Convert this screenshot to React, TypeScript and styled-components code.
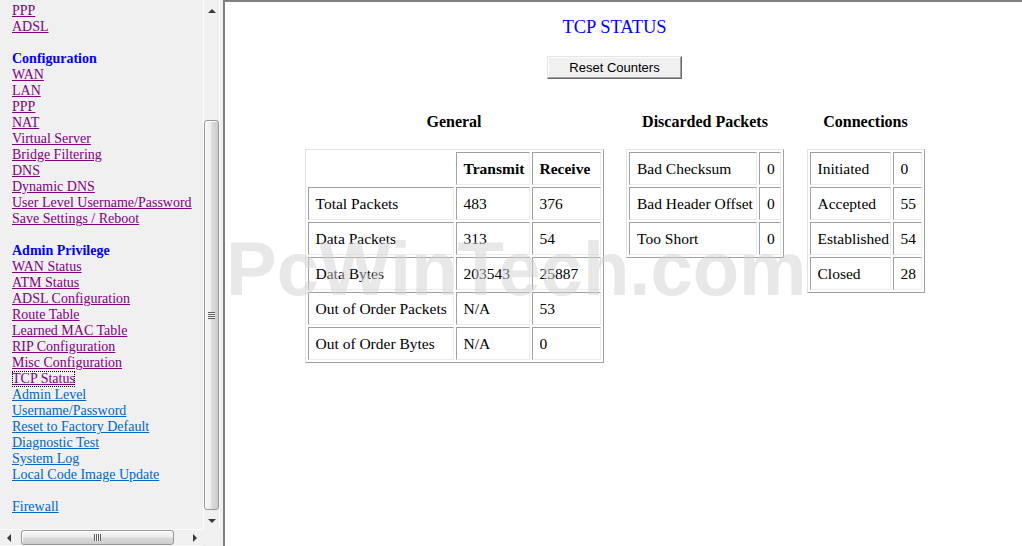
import React from "react";
import styled, { createGlobalStyle } from "styled-components";

const GlobalStyle = createGlobalStyle`
  html, body { margin: 0; padding: 0; background: #ffffff; overflow: hidden; }
  body { font-family: "Liberation Serif", "Times New Roman", serif; }
`;

const Frameset = styled.div`
  display: flex;
  width: 1022px;
  height: 546px;
  overflow: hidden;
`;

/* ---------- left navigation frame ---------- */

const LeftFrame = styled.div`
  flex: none;
  display: grid;
  grid-template-columns: 203px 17px;
  grid-template-rows: 529px 17px;
  padding-right: 3px;
  background: #f0f0f0;
`;

const Nav = styled.nav`
  overflow: hidden;
  padding: 3px 0 0 12px;
  display: flex;
  flex-direction: column;
  align-items: flex-start;
  font-family: "Liberation Serif", "Times New Roman", serif;
  font-size: 14px;
  line-height: 16px;
  white-space: nowrap;
`;

const NavHeading = styled.div`
  color: #0000ff;
  font-weight: bold;
`;

const NavGap = styled.div`
  height: 16px;
`;

type LinkState = "visited" | "link" | "focus";

const NavLink = styled.a<{ $state: LinkState }>`
  color: ${({ $state }) => ($state === "link" ? "#0066cc" : "#800080")};
  text-decoration: underline;
  outline: ${({ $state }) => ($state === "focus" ? "1px dotted #000" : "none")};
  outline-offset: -1px;
`;

const VScroll = styled.div`
  display: flex;
  flex-direction: column;
  background: #f0f0f0;
  box-shadow: inset 1px 0 #fbfbfb, inset -1px 0 #fbfbfb;
`;

const HScroll = styled.div`
  display: flex;
  flex-direction: row;
  align-items: center;
  background: #f0f0f0;
  box-shadow: inset 0 1px #fbfbfb, inset 0 -1px #fbfbfb;
`;

const Corner = styled.div`
  background: #f0f0f0;
`;

const ScrollButton = styled.div<{ $len: number; $horizontal?: boolean }>`
  flex: none;
  display: flex;
  align-items: center;
  justify-content: center;
  ${({ $len, $horizontal }) =>
    $horizontal ? `width: ${$len}px; height: 17px;` : `height: ${$len}px; width: 17px;`}
`;

type Dir = "up" | "down" | "left" | "right";

const Arrow = styled.span<{ $dir: Dir }>`
  width: 0;
  height: 0;
  border-style: solid;
  border-color: transparent;
  ${({ $dir }) =>
    $dir === "up"
      ? "border-width: 0 4px 4px 4px; border-bottom-color: #3a3a3a;"
      : $dir === "down"
      ? "border-width: 4px 4px 0 4px; border-top-color: #3a3a3a;"
      : $dir === "left"
      ? "border-width: 4px 4px 4px 0; border-right-color: #3a3a3a;"
      : "border-width: 4px 0 4px 4px; border-left-color: #3a3a3a;"}
`;

const VThumb = styled.div`
  flex: none;
  margin: 99px 0 0 1px;
  width: 15px;
  height: 390px;
  box-sizing: border-box;
  border: 1px solid #979797;
  border-radius: 3px;
  background: linear-gradient(to right, #f6f6f6 0%, #ececec 45%, #d9d9d9 55%, #cdcdcd 100%);
  box-shadow: inset 1px 1px #ffffff;
  display: flex;
  align-items: center;
  justify-content: center;
`;

const VGrip = styled.span`
  width: 7px;
  height: 7px;
  background: repeating-linear-gradient(to bottom, #5c5c5c 0 1px, #f6f6f6 1px 2px);
`;

const VTrackFill = styled.div`
  flex: 1;
`;

const HThumb = styled.div`
  flex: none;
  margin-left: 4px;
  width: 153px;
  height: 15px;
  box-sizing: border-box;
  border: 1px solid #979797;
  border-radius: 3px;
  background: linear-gradient(to bottom, #f6f6f6 0%, #ececec 45%, #d9d9d9 55%, #cdcdcd 100%);
  box-shadow: inset 1px 1px #ffffff;
  display: flex;
  align-items: center;
  justify-content: center;
`;

const HGrip = styled.span`
  width: 7px;
  height: 7px;
  background: repeating-linear-gradient(to right, #5c5c5c 0 1px, #f6f6f6 1px 2px);
`;

const HTrackFill = styled.div`
  flex: 1;
`;

/* ---------- right content frame ---------- */

const RightFrame = styled.main`
  flex: 1;
  position: relative;
  background: #ffffff;
  border-top: 2px solid #808080;
  border-left: 2px solid #808080;
  padding-right: 18px;
  display: flex;
  flex-direction: column;
  align-items: center;
  overflow: hidden;
`;

const Title = styled.h1`
  margin: 15px 0 0;
  font-family: "Liberation Serif", "Times New Roman", serif;
  font-size: 18.5px;
  line-height: 21px;
  font-weight: normal;
  color: #0000ff;
`;

const ResetButton = styled.button`
  margin-top: 18px;
  width: 135px;
  height: 23px;
  padding: 0;
  box-sizing: border-box;
  background: #f0f0f0;
  border: 1px solid;
  border-color: #e3e3e3 #696969 #696969 #e3e3e3;
  box-shadow: inset -1px -1px #a0a0a0, inset 1px 1px #ffffff;
  font-family: "Liberation Sans", Arial, sans-serif;
  font-size: 13px;
  color: #000;
`;

const SectionsRow = styled.div`
  margin-top: 34px;
  display: flex;
  align-items: flex-start;
  gap: 22.5px;
`;

const Section = styled.section`
  display: flex;
  flex-direction: column;
  align-items: center;
`;

const SectionTitle = styled.h2`
  margin: 0;
  font-family: "Liberation Serif", "Times New Roman", serif;
  font-size: 16px;
  line-height: 18px;
  font-weight: bold;
  color: #000;
  white-space: nowrap;
`;

const Table = styled.table<{ $width: number }>`
  margin-top: 18px;
  width: ${({ $width }) => $width}px;
  box-sizing: border-box;
  table-layout: fixed;
  border-collapse: separate;
  border-spacing: 2px;
  empty-cells: hide;
  border: 1px solid;
  border-color: #e3e3e3 #a0a0a0 #a0a0a0 #e3e3e3;
  font-family: "Liberation Serif", "Times New Roman", serif;
  font-size: 15.5px;
  line-height: 18px;
  color: #000;
`;

const Td = styled.td<{ $w?: number }>`
  box-sizing: border-box;
  ${({ $w }) => ($w ? `width: ${$w}px;` : "")}
  padding: 7px 7px 6px;
  border: 1px solid;
  border-color: #a0a0a0 #ececec #ececec #a0a0a0;
  text-align: left;
  white-space: nowrap;
  overflow: visible;
`;

const Th = styled(Td).attrs({ as: "th" })`
  font-weight: bold;
`;

const Watermark = styled.div`
  position: absolute;
  left: 1px;
  top: 229px;
  font-family: "Liberation Sans", Arial, sans-serif;
  font-weight: bold;
  font-size: 76px;
  line-height: 76px;
  color: rgba(210, 210, 210, 0.5);
  white-space: nowrap;
  pointer-events: none;
  user-select: none;
`;

/* ---------- data ---------- */

type NavItem =
  | { kind: "link"; text: string; state: LinkState }
  | { kind: "heading"; text: string }
  | { kind: "gap" };

const v = (text: string): NavItem => ({ kind: "link", text, state: "visited" });
const l = (text: string): NavItem => ({ kind: "link", text, state: "link" });
const h = (text: string): NavItem => ({ kind: "heading", text });
const gap: NavItem = { kind: "gap" };

const navItems: NavItem[] = [
  v("PPP"),
  v("ADSL"),
  gap,
  h("Configuration"),
  v("WAN"),
  v("LAN"),
  v("PPP"),
  v("NAT"),
  v("Virtual Server"),
  v("Bridge Filtering"),
  v("DNS"),
  v("Dynamic DNS"),
  v("User Level Username/Password"),
  v("Save Settings / Reboot"),
  gap,
  h("Admin Privilege"),
  v("WAN Status"),
  v("ATM Status"),
  v("ADSL Configuration"),
  v("Route Table"),
  v("Learned MAC Table"),
  v("RIP Configuration"),
  v("Misc Configuration"),
  { kind: "link", text: "TCP Status", state: "focus" },
  l("Admin Level"),
  l("Username/Password"),
  l("Reset to Factory Default"),
  l("Diagnostic Test"),
  l("System Log"),
  l("Local Code Image Update"),
  gap,
  l("Firewall"),
];

interface TableSpec {
  title: string;
  cols: number[];
  header?: string[];
  rows: string[][];
}

const sections: TableSpec[] = [
  {
    title: "General",
    cols: [146, 74, 69],
    header: ["", "Transmit", "Receive"],
    rows: [
      ["Total Packets", "483", "376"],
      ["Data Packets", "313", "54"],
      ["Data Bytes", "203543", "25887"],
      ["Out of Order Packets", "N/A", "53"],
      ["Out of Order Bytes", "N/A", "0"],
    ],
  },
  {
    title: "Discarded Packets",
    cols: [128, 22],
    rows: [
      ["Bad Checksum", "0"],
      ["Bad Header Offset", "0"],
      ["Too Short", "0"],
    ],
  },
  {
    title: "Connections",
    cols: [81, 29],
    rows: [
      ["Initiated", "0"],
      ["Accepted", "55"],
      ["Established", "54"],
      ["Closed", "28"],
    ],
  },
];

function StatTable({ spec }: { spec: TableSpec }) {
  const width = spec.cols.reduce((a, b) => a + b, 0) + 2 * (spec.cols.length + 1) + 2;
  return (
    <Section>
      <SectionTitle>{spec.title}</SectionTitle>
      <Table $width={width}>
        <tbody>
          {spec.header && (
            <tr>
              {spec.header.map((c, i) => (
                <Th key={i} $w={spec.cols[i]}>
                  {c}
                </Th>
              ))}
            </tr>
          )}
          {spec.rows.map((row, r) => (
            <tr key={r}>
              {row.map((c, i) => (
                <Td key={i} $w={!spec.header && r === 0 ? spec.cols[i] : undefined}>
                  {c}
                </Td>
              ))}
            </tr>
          ))}
        </tbody>
      </Table>
    </Section>
  );
}

export default function App() {
  return (
    <>
      <GlobalStyle />
      <Frameset>
        <LeftFrame>
          <Nav>
            {navItems.map((item, i) =>
              item.kind === "gap" ? (
                <NavGap key={i} />
              ) : item.kind === "heading" ? (
                <NavHeading key={i}>{item.text}</NavHeading>
              ) : (
                <NavLink key={i} href="#" $state={item.state}>
                  {item.text}
                </NavLink>
              )
            )}
          </Nav>
          <VScroll>
            <ScrollButton $len={21}>
              <Arrow $dir="up" />
            </ScrollButton>
            <VThumb>
              <VGrip />
            </VThumb>
            <VTrackFill />
            <ScrollButton $len={17}>
              <Arrow $dir="down" />
            </ScrollButton>
          </VScroll>
          <HScroll>
            <ScrollButton $len={17} $horizontal>
              <Arrow $dir="left" />
            </ScrollButton>
            <HThumb>
              <HGrip />
            </HThumb>
            <HTrackFill />
            <ScrollButton $len={17} $horizontal>
              <Arrow $dir="right" />
            </ScrollButton>
          </HScroll>
          <Corner />
        </LeftFrame>
        <RightFrame>
          <Title>TCP STATUS</Title>
          <ResetButton type="button">Reset Counters</ResetButton>
          <SectionsRow>
            {sections.map((s) => (
              <StatTable key={s.title} spec={s} />
            ))}
          </SectionsRow>
          <Watermark aria-hidden="true">PcWinTech.com</Watermark>
        </RightFrame>
      </Frameset>
    </>
  );
}
